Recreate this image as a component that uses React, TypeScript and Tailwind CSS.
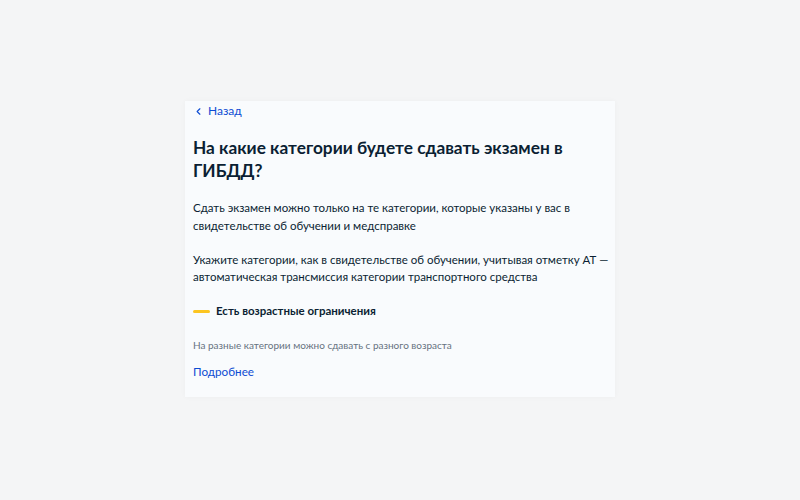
import { ChevronLeft } from "lucide-react";

export default function App() {
  return (
    <div className="min-h-[500px] w-full bg-[#f4f5f6] pt-[101px] font-['Lato',sans-serif] text-[#0b1f33]">
      <div className="mx-auto w-[430px] bg-[#f9fbfd] pb-[17px] pl-2 pr-0 pt-[1px] shadow-[0_0_6px_rgba(0,0,0,0.03)]">
        <a className="flex items-center gap-[4px] text-[12px] leading-[18px] text-[#0d4cd3]">
          <ChevronLeft className="size-[11px]" strokeWidth={2.5} />
          Назад
        </a>

        <h1 className="mt-[16px] pr-2 text-[17.3px] font-bold leading-[23px]">
          На какие категории будете сдавать экзамен в ГИБДД?
        </h1>

        <p className="mt-[17px] text-[11.5px] leading-[18px]">
          Сдать экзамен можно только на те категории, которые указаны у вас в свидетельстве об обучении и медсправке
        </p>
        <p className="mt-[16px] text-[11.5px] leading-[17px]">
          Укажите категории, как в свидетельстве об обучении, учитывая отметку АТ{"\u00a0"}— автоматическая трансмиссия категории транспортного средства
        </p>

        <div className="mt-[17px] flex items-center gap-[6px]">
          <span className="h-[3px] w-[17px] rounded-full bg-[#fcc521]" />
          <span className="text-[11.5px] font-bold leading-[18px]">Есть возрастные ограничения</span>
        </div>

        <p className="mt-[17px] text-[10px] leading-[16px] text-[#66727f]">
          На разные категории можно сдавать с разного возраста
        </p>

        <a className="mt-[9px] block text-[11.7px] leading-[18px] text-[#0d4cd3]">Подробнее</a>
      </div>
    </div>
  );
}
